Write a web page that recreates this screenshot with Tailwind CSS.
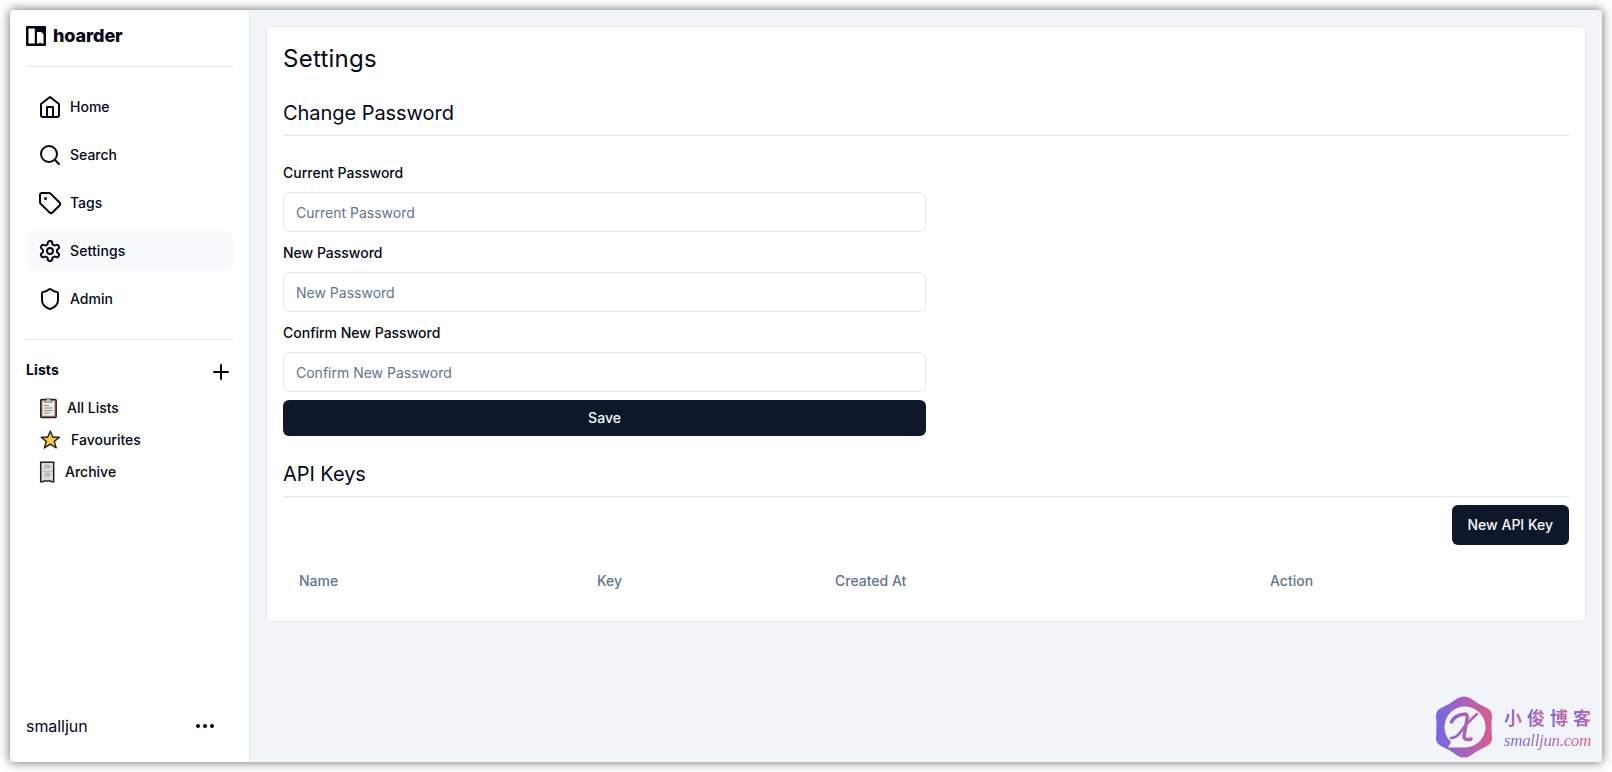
<!DOCTYPE html>
<html lang="en">
<head>
  <meta charset="UTF-8" />
  <meta name="viewport" content="width=device-width, initial-scale=1.0" />
  <title>Hoarder - Settings</title>
  <script src="https://cdn.jsdelivr.net/npm/@tailwindcss/browser@4"></script>
</head>
<body class="bg-white p-[10px] font-['Inter',sans-serif] text-[#020817]">
  <div class="h-[752px] bg-[#eee] shadow-[0_0_10px_rgba(0,0,0,0.6)]">
    <div class="relative flex h-full overflow-hidden rounded-lg bg-white">
      <!-- Sidebar -->
      <aside class="flex w-60 shrink-0 flex-col border-r border-[#e2e8f0] p-4">
        <a href="#" class="flex h-5 items-center gap-[7px]">
          <svg class="size-5" viewBox="0 0 20 20">
            <rect width="20" height="20" rx="1" fill="#020817" />
            <path d="M2.500 2.500h6.300v15H2.500z" fill="#fff" />
            <path d="M11 6h3.500q3 .5 3 3.500v8h-2l-1.300-1-1.700 1H11z" fill="#fff" />
          </svg>
          <span class="text-[18px] leading-5 font-extrabold tracking-[-0.1px]">hoarder</span>
        </a>
        <div class="mt-5 h-px shrink-0 bg-[#e2e8f0]"></div>

        <ul class="mt-5 space-y-2 text-sm font-medium">
          <li>
            <a href="#" class="flex h-10 items-center gap-2 rounded-lg px-3">
              <svg class="size-6" viewBox="0 0 24 24" fill="none" stroke="currentColor" stroke-width="2" stroke-linecap="round" stroke-linejoin="round"><path d="m3 9 9-7 9 7v11a2 2 0 0 1-2 2H5a2 2 0 0 1-2-2z" /><path d="M9 22V12h6v10" /></svg>
              Home
            </a>
          </li>
          <li>
            <a href="#" class="flex h-10 items-center gap-2 rounded-lg px-3">
              <svg class="size-6" viewBox="0 0 24 24" fill="none" stroke="currentColor" stroke-width="2" stroke-linecap="round" stroke-linejoin="round"><circle cx="11" cy="11" r="8" /><path d="m21 21-4.300-4.300" /></svg>
              Search
            </a>
          </li>
          <li>
            <a href="#" class="flex h-10 items-center gap-2 rounded-lg px-3">
              <svg class="size-6" viewBox="0 0 24 24" fill="none" stroke="currentColor" stroke-width="2" stroke-linecap="round" stroke-linejoin="round"><path d="M12.586 2.586A2 2 0 0 0 11.172 2H4a2 2 0 0 0-2 2v7.172a2 2 0 0 0 .586 1.414l8.704 8.704a2.426 2.426 0 0 0 3.420 0l6.580-6.580a2.426 2.426 0 0 0 0-3.420z" /><circle cx="7.500" cy="7.500" r=".5" fill="currentColor" /></svg>
              Tags
            </a>
          </li>
          <li>
            <a href="#" class="flex h-10 items-center gap-2 rounded-lg bg-[#f8fafc] px-3 tracking-[0.1px]">
              <svg class="size-6" viewBox="0 0 24 24" fill="none" stroke="currentColor" stroke-width="2" stroke-linecap="round" stroke-linejoin="round"><path d="M12.220 2h-.44a2 2 0 0 0-2 2v.18a2 2 0 0 1-1 1.730l-.43.25a2 2 0 0 1-2 0l-.15-.08a2 2 0 0 0-2.730.73l-.22.38a2 2 0 0 0 .73 2.730l.15.1a2 2 0 0 1 1 1.720v.51a2 2 0 0 1-1 1.740l-.15.09a2 2 0 0 0-.73 2.730l.22.38a2 2 0 0 0 2.730.73l.15-.08a2 2 0 0 1 2 0l.43.25a2 2 0 0 1 1 1.730V20a2 2 0 0 0 2 2h.44a2 2 0 0 0 2-2v-.18a2 2 0 0 1 1-1.730l.43-.25a2 2 0 0 1 2 0l.15.08a2 2 0 0 0 2.730-.73l.22-.39a2 2 0 0 0-.73-2.730l-.15-.08a2 2 0 0 1-1-1.740v-.5a2 2 0 0 1 1-1.740l.15-.09a2 2 0 0 0 .73-2.730l-.22-.38a2 2 0 0 0-2.730-.73l-.15.08a2 2 0 0 1-2 0l-.43-.25a2 2 0 0 1-1-1.730V4a2 2 0 0 0-2-2z" /><circle cx="12" cy="12" r="3" /></svg>
              Settings
            </a>
          </li>
          <li>
            <a href="#" class="flex h-10 items-center gap-2 rounded-lg px-3">
              <svg class="size-6" viewBox="0 0 24 24" fill="none" stroke="currentColor" stroke-width="2" stroke-linecap="round" stroke-linejoin="round"><path d="M20 13c0 5-3.500 7.500-7.660 8.950a1 1 0 0 1-.67-.01C7.500 20.500 4 18 4 13V6a1 1 0 0 1 1-1c2 0 4.500-1.200 6.240-2.720a1.170 1.170 0 0 1 1.520 0C14.510 3.810 17 5 19 5a1 1 0 0 1 1 1z" /></svg>
              Admin
            </a>
          </li>
        </ul>
        <div class="mt-5 h-px shrink-0 bg-[#e2e8f0]"></div>

        <!-- Lists -->
        <div class="mt-5 flex h-6 justify-between">
          <p class="text-sm font-bold tracking-[0.1px]">Lists</p>
          <a href="#"><svg class="size-6" viewBox="0 0 24 24" fill="none" stroke="currentColor" stroke-width="2" stroke-linecap="round"><path d="M5 12h14M12 5v14" /></svg></a>
        </div>
        <ul class="mt-2 text-sm font-medium">
          <li>
            <a href="#" class="flex h-8 items-center gap-[9px] px-3">
              <svg class="h-[22px] w-5" viewBox="0 0 20 22">
                <rect x="2.700" y="2.500" width="15.500" height="18" rx="1" fill="#b9794e" stroke="#222" stroke-width="1.400" />
                <rect x="4.500" y="3.800" width="12" height="15" fill="#eee" />
                <path d="M6.500 3.200h2a1.800 1.800 0 0 1 3.600 0h2v2H6.500z" fill="#ccc" stroke="#444" stroke-width=".6" />
                <path d="M6 8.500h5M6 11h8.500M6 13.500h8.500M6 16h5.500" stroke="#777" stroke-width=".9" />
              </svg>
              All Lists
            </a>
          </li>
          <li>
            <a href="#" class="flex h-8 items-center gap-[9px] px-3">
              <svg class="size-6" viewBox="0 0 24 24"><path d="m12.300 3.200 2.600 6h6.500l-5.100 4.200 1.900 6.500-5.900-3.800-5.900 3.800 1.900-6.500-5.100-4.200h6.500z" fill="#ffc83d" stroke="#1f1f1f" stroke-width="1.400" stroke-linejoin="round" /></svg>
              Favourites
            </a>
          </li>
          <li>
            <a href="#" class="flex h-8 items-center gap-[9px] px-3">
              <svg class="h-[22px] w-[18px]" viewBox="0 0 18 22">
                <path d="M2.700 1.200h13v19.500h-2l-1-.7H6l-1 .7H2.700z" fill="#dcdcdc" stroke="#222" stroke-width="1.500" />
                <path d="M3.500 10.500h11.500" stroke="#bbb" />
                <path d="M7.500 4.500h3.500v2.200H7.500zM7.500 12.500h3.500v2.200H7.500z" fill="#fff" stroke="#888" stroke-width=".9" />
              </svg>
              Archive
            </a>
          </li>
        </ul>

        <div class="mt-auto flex h-10 items-center justify-between pr-4">
          <span class="tracking-[-0.05px]">smalljun</span>
          <svg class="size-6" viewBox="0 0 24 24" fill="currentColor"><circle cx="5" cy="12" r="2" /><circle cx="12" cy="12" r="2" /><circle cx="19" cy="12" r="2" /></svg>
        </div>
      </aside>

      <!-- Content -->
      <main class="flex-1 bg-[#f1f5f9] p-4">
        <div class="rounded-md border border-[#e2e8f0] bg-white p-4">
          <h1 class="text-2xl tracking-[0.25px]">Settings</h1>

          <h2 class="mt-6 border-b border-[#e2e8f0] pb-2 text-xl tracking-[-0.05px]">Change Password</h2>
          <form class="mt-6 flex w-1/2 flex-col gap-2">
            <label for="current" class="h-6 pt-px text-sm/6 font-medium">Current Password</label>
            <input type="password" id="current" placeholder="Current Password" class="h-10 rounded-md border border-[#e2e8f0] px-3 text-sm placeholder:text-[#64748b]" />
            <label for="new" class="h-6 pt-px text-sm/6 font-medium">New Password</label>
            <input type="password" id="new" placeholder="New Password" class="h-10 rounded-md border border-[#e2e8f0] px-3 text-sm placeholder:text-[#64748b]" />
            <label for="confirm" class="h-6 pt-px text-sm/6 font-medium">Confirm New Password</label>
            <input type="password" id="confirm" placeholder="Confirm New Password" class="h-10 rounded-md border border-[#e2e8f0] px-3 text-sm placeholder:text-[#64748b]" />
            <button type="submit" class="h-9 rounded-md bg-[#0f172a] text-sm font-medium text-[#f8fafc]">Save</button>
          </form>

          <h2 class="mt-6 border-b border-[#e2e8f0] pb-2 text-xl tracking-[-0.05px]">API Keys</h2>
          <div class="mt-2 flex justify-end">
            <button class="h-10 rounded-md bg-[#0f172a] px-4 text-sm font-medium text-[#f8fafc]">New API Key</button>
          </div>
          <table class="mt-3 w-full table-fixed text-left text-sm text-[#64748b]">
            <thead>
              <tr class="h-12">
                <th class="w-[298px] px-4 font-medium">Name</th>
                <th class="w-[238px] px-4 font-medium">Key</th>
                <th class="w-[435px] px-4 font-medium">Created At</th>
                <th class="px-4 font-medium">Action</th>
              </tr>
            </thead>
          </table>
        </div>
      </main>

      <!-- Watermark -->
      <div class="absolute right-[11px] bottom-[4px] flex items-center gap-3">
        <svg class="h-[62px] w-[56px]" viewBox="0 0 56 62">
          <defs>
            <linearGradient id="brand" gradientUnits="userSpaceOnUse" x1="0" y1="31" x2="56" y2="31"><stop stop-color="#7467e2" /><stop offset="1" stop-color="#dc5b91" /></linearGradient>
          </defs>
          <path d="M22 2q6-3 12 0 8 6 17 10 5 2.500 5 8-1 11 0 22 0 5.500-5 8-9 4-17 10-6 3-12 0-8-6-17-10-5-2.500-5-8 1-11 0-22 0-5.500 5-8 9-4 17-10z" fill="url(#brand)" />
          <path d="M12 51.500l3-5.500a20.500 20.500 0 1 1 13 5.500z" fill="#f1f5f9" />
          <g fill="none" stroke="url(#brand)" stroke-linecap="round">
            <path d="M15.500 26q3-7 13.500-8 3 .5 2 5l-3 17q0 5 7 3" stroke-width="3.500" />
            <path d="M41 18Q31 27 26 34 21 42 15 42" stroke-width="2.500" />
          </g>
        </svg>
        <div class="flex w-[87px] flex-col pt-[3px]">
          <span class="flex justify-between font-['Noto_Sans_CJK_SC',sans-serif] text-[18px] leading-6 font-bold">
            <span class="bg-linear-to-r from-[#7467e2] to-[#dc5b91] bg-clip-text text-transparent">小</span>
            <span class="bg-linear-to-r from-[#7467e2] to-[#dc5b91] bg-clip-text text-transparent">俊</span>
            <span class="bg-linear-to-r from-[#7467e2] to-[#dc5b91] bg-clip-text text-transparent">博</span>
            <span class="bg-linear-to-r from-[#7467e2] to-[#dc5b91] bg-clip-text text-transparent">客</span>
          </span>
          <span class="bg-linear-to-r from-[#7467e2] to-[#dc5b91] bg-clip-text font-['Liberation_Serif',serif] text-[17px] leading-6 tracking-[-0.35px] text-transparent italic">smalljun.com</span>
        </div>
      </div>
    </div>
  </div>
</body>
</html>
